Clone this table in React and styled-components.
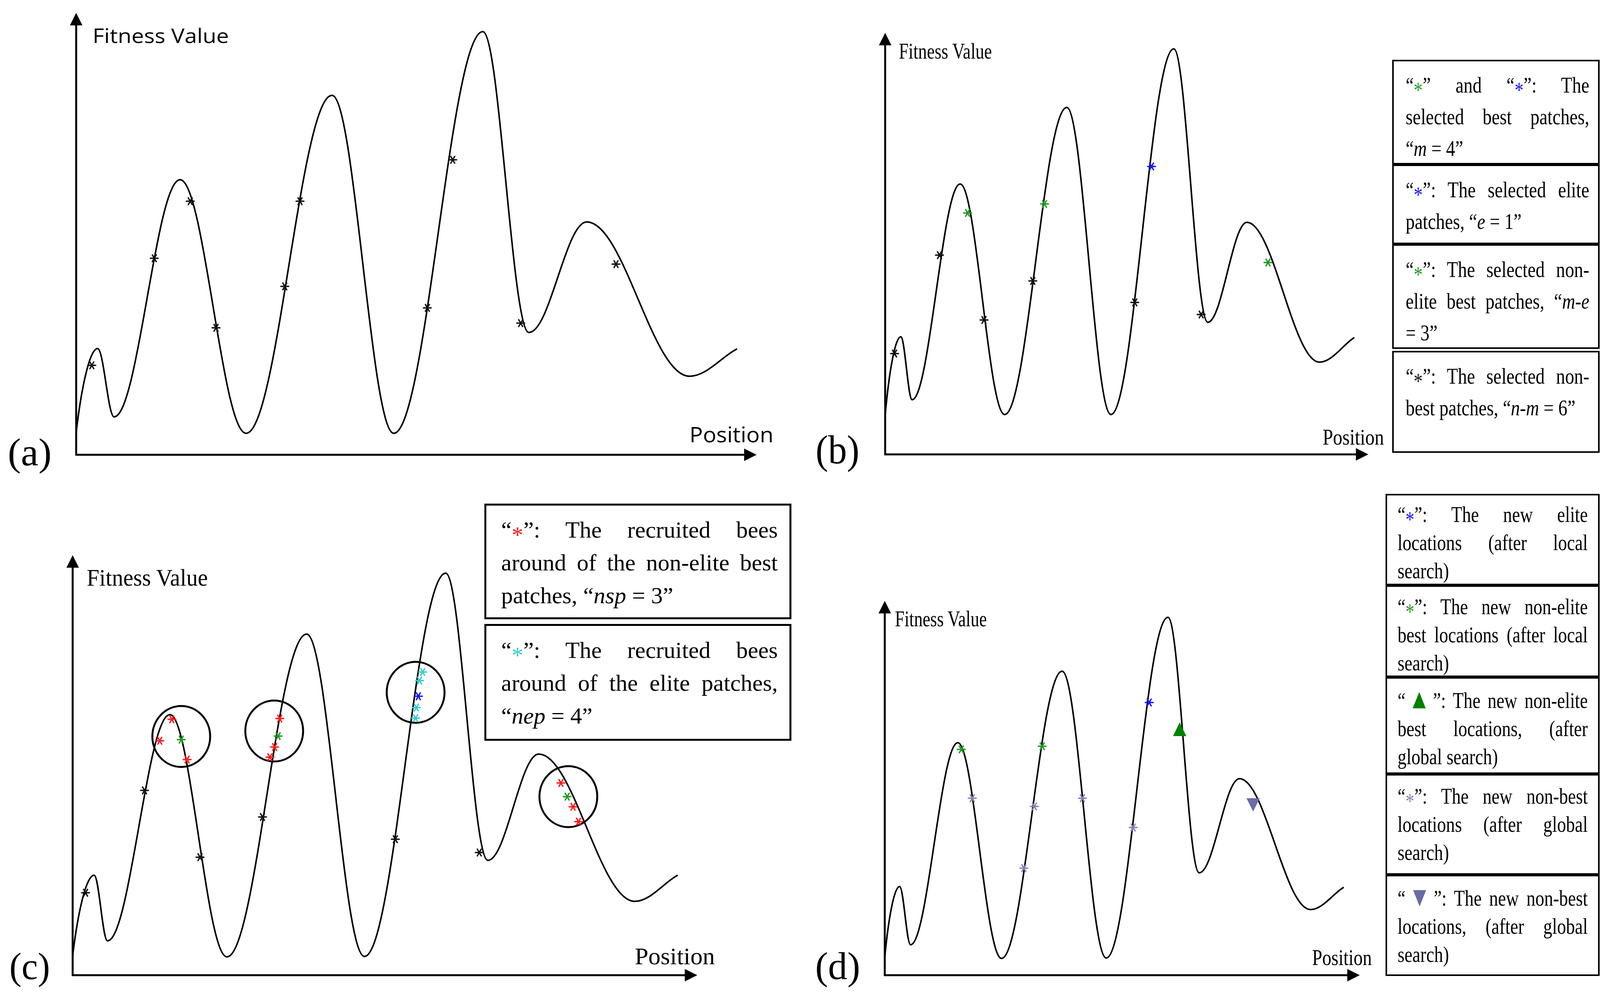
import styled, { createGlobalStyle } from 'styled-components';

const GlobalStyle = createGlobalStyle`
  html, body {
    margin: 0;
    padding: 0;
    background: #fff;
    overflow: hidden;
  }
  body {
    font-family: "Liberation Serif", "Times New Roman", serif;
    color: #000;
  }
`;

// colours of the markers
const C = {
  black: '#111',
  green: '#229922',
  blue: '#1414ff',
  red: '#ff1a1a',
  cyan: '#33cccc',
  slate: '#8585b8',
  tri: '#008000',
  triDown: '#6b6ba3',
};

// em widths of the axis words in Liberation Serif
const EM = { fitness: 5.672, position: 3.279 };

const Figure = styled.div`
  width: 4110px;
  height: 2539px;
  display: grid;
  grid-template-columns: 2080px 2030px;
  grid-template-rows: 1250px 1289px;
  background: #fff;
`;

const Panel = styled.div`
  display: flex;
  align-items: flex-start;
  overflow: hidden;
`;

// chart with a legend laid over it
const Stage = styled.div`
  display: grid;
  & > * {
    grid-area: 1 / 1;
  }
`;

const ChartSvg = styled.svg`
  display: block;
  flex: none;
`;

const AxisText = styled.text`
  font-family: ${(p) =>
    p.$sans ? '"Open Sans", "Noto Sans", "Liberation Sans", sans-serif' : '"Liberation Serif", "Times New Roman", serif'};
  fill: #000;
`;

const PanelTag = styled.text`
  font-family: "Liberation Serif", "Times New Roman", serif;
  fill: #000;
`;

const LegendStack = styled.div`
  display: flex;
  flex-direction: column;
  flex: none;
  width: ${(p) => p.$w}px;
  margin-top: ${(p) => p.$top}px;
  margin-left: ${(p) => p.$left || 0}px;
  gap: ${(p) => p.$gap || 0}px;
  align-self: start;
  justify-self: start;
`;

const LegendBox = styled.div`
  box-sizing: border-box;
  height: ${(p) => p.$h}px;
  margin-top: ${(p) => p.$mt || 0}px;
  border: ${(p) => p.$bw}px solid #000;
  padding: ${(p) => p.$pt}px ${(p) => p.$pr}px 0 ${(p) => p.$pl}px;
  font-family: "Liberation Serif", "Times New Roman", serif;
  font-size: ${(p) => p.$fs}px;
  line-height: ${(p) => p.$lh}px;
  color: #000;
  background: #fff;
`;

// a squeezed line is laid out wider and shrunk back from its right edge,
// so its box never reaches past the page
const Line = styled.div`
  height: ${(p) => p.$lh}px;
  width: ${(p) => (p.$squeeze ? `${100 / p.$squeeze}%` : '100%')};
  margin-left: ${(p) => (p.$squeeze ? `${100 - 100 / p.$squeeze}%` : '0')};
  transform: ${(p) => (p.$squeeze ? `scaleX(${p.$squeeze})` : 'none')};
  transform-origin: 100% 0;
  text-align: ${(p) => (p.$last ? 'left' : 'justify')};
  text-align-last: ${(p) => (p.$last ? 'left' : 'justify')};
`;

const Mark = styled.span`
  color: ${(p) => p.$c};
  position: relative;
  line-height: 0;
  top: ${(p) => (p.$shape ? '0.02em' : '0.22em')};
  font-size: ${(p) => (p.$shape ? '1.25em' : '1em')};
`;

const Var = styled.i`
  font-style: italic;
`;

const K = 0.363;

const curvePath = (pts) => {
  let d = `M${pts[0][0]},${pts[0][1]}`;
  for (let i = 1; i < pts.length; i++) {
    const [x0, y0] = pts[i - 1];
    const [x1, y1] = pts[i];
    const dx = x1 - x0;
    const first = i === 1;
    const last = i === pts.length - 1;
    const c1 = first ? [x0 + 0.25 * dx, y0 + 0.55 * (y1 - y0)] : [x0 + K * dx, y0];
    const c2 = last ? [x1 - 0.3 * dx, y1 + 0.25 * (y0 - y1)] : [x1 - K * dx, y1];
    d += ` C${c1[0]},${c1[1]} ${c2[0]},${c2[1]} ${x1},${y1}`;
  }
  return d;
};

const Asterisk = ({ x, y, color, r = 10 }) => (
  <g stroke={color} strokeWidth={3.5} strokeLinecap="round">
    <line x1={x - r} y1={y} x2={x + r} y2={y} />
    <line x1={x - r / 2} y1={y - r * 0.866} x2={x + r / 2} y2={y + r * 0.866} />
    <line x1={x + r / 2} y1={y - r * 0.866} x2={x - r / 2} y2={y + r * 0.866} />
  </g>
);

const Axes = ({ ax, ay, top, right, head = 32 }) => (
  <g>
    <line x1={ax} y1={ay + 2} x2={ax} y2={top + head - 4} stroke="#000" strokeWidth={5} />
    <polygon points={`${ax - head / 2},${top + head} ${ax},${top} ${ax + head / 2},${top + head}`} fill="#000" />
    <line x1={ax - 2} y1={ay} x2={right - head + 4} y2={ay} stroke="#000" strokeWidth={5} />
    <polygon points={`${right - head},${ay - head / 2} ${right},${ay} ${right - head},${ay + head / 2}`} fill="#000" />
  </g>
);

// sans labels are fitted with textLength, serif ones are squeezed by a transform
const Label = ({ sans, spec, em, children }) =>
  sans ? (
    <AxisText $sans x={spec.x} y={spec.y} fontSize={spec.fs} textLength={spec.len} lengthAdjust="spacingAndGlyphs">
      {children}
    </AxisText>
  ) : (
    <AxisText transform={`translate(${spec.x} ${spec.y}) scale(${(spec.len / (em * spec.fs)).toFixed(3)} 1)`} fontSize={spec.fs}>
      {children}
    </AxisText>
  );

const Chart = ({ spec }) => (
  <ChartSvg width={spec.w} height={spec.h} viewBox={`0 0 ${spec.w} ${spec.h}`}>
    <Axes ax={spec.ax} ay={spec.ay} top={spec.top} right={spec.right} />
    <path d={curvePath(spec.curve)} fill="none" stroke="#000" strokeWidth={4} strokeLinejoin="round" />
    {(spec.circles || []).map(([x, y], i) => (
      <ellipse key={i} cx={x} cy={y} rx={74} ry={78} fill="none" stroke="#000" strokeWidth={5} />
    ))}
    {spec.stars.map(([x, y, c], i) => (
      <Asterisk key={i} x={x} y={y} color={c} />
    ))}
    {(spec.triangles || []).map(([x, y, up, c], i) => (
      <polygon
        key={i}
        points={
          up
            ? `${x - 17},${y + 17} ${x + 17},${y + 17} ${x},${y - 18}`
            : `${x - 17},${y - 17} ${x + 17},${y - 17} ${x},${y + 17}`
        }
        fill={c}
      />
    ))}
    <Label sans={spec.sans} spec={spec.yLabel} em={EM.fitness}>
      Fitness Value
    </Label>
    <Label sans={spec.sans} spec={spec.xLabel} em={EM.position}>
      Position
    </Label>
    <PanelTag x={spec.tag.x} y={spec.tag.y} fontSize={spec.tag.fs} textLength={spec.tag.len} lengthAdjust="spacingAndGlyphs">
      {spec.tag.text}
    </PanelTag>
  </ChartSvg>
);

const chartA = {
  w: 2080,
  h: 1250,
  sans: true,
  ax: 195,
  ay: 1164,
  top: 33,
  right: 1937,
  curve: [
    [195, 1107], [250, 892], [292, 1067], [461, 460], [630, 1109], [850, 244],
    [1008, 1109], [1236, 81], [1354, 851], [1502, 568], [1765, 963], [1887, 893],
  ],
  stars: [
    [235, 935, C.black], [395, 661, C.black], [487, 515, C.black], [553, 839, C.black],
    [729, 733, C.black], [768, 515, C.black], [1094, 788, C.black], [1159, 409, C.black],
    [1333, 827, C.black], [1577, 676, C.black],
  ],
  yLabel: { x: 237, y: 110, fs: 52, len: 349 },
  xLabel: { x: 1765, y: 1132, fs: 54, len: 215 },
  tag: { x: 20, y: 1191, fs: 100, len: 112, text: '(a)' },
};

const chartB = {
  w: 1484,
  h: 1250,
  ax: 186,
  ay: 1163,
  top: 84,
  right: 1423,
  curve: [
    [186, 1063], [226, 862], [255, 1023], [378, 471], [492, 1061], [651, 275],
    [764, 1061], [925, 125], [1012, 825], [1112, 569], [1298, 927], [1387, 864],
  ],
  stars: [
    [210, 905, C.black], [325, 653, C.black], [439, 819, C.black], [564, 719, C.black],
    [825, 774, C.black], [995, 805, C.black], [397, 545, C.green], [594, 522, C.green],
    [1166, 672, C.green], [868, 426, C.blue],
  ],
  yLabel: { x: 221, y: 150, fs: 56, len: 253 },
  xLabel: { x: 1306, y: 1138, fs: 56, len: 157 },
  tag: { x: 8, y: 1186, fs: 103, len: 112, text: '(b)' },
};

const chartC = {
  w: 2080,
  h: 1289,
  ax: 186,
  ay: 1246,
  top: 171,
  right: 1785,
  curve: [
    [186, 1196], [241, 990], [275, 1158], [435, 579], [581, 1199], [785, 373],
    [933, 1198], [1141, 217], [1249, 952], [1379, 680], [1625, 1057], [1735, 990],
  ],
  circles: [[464, 635], [702, 621], [1064, 522], [1455, 789]],
  stars: [
    [219, 1035, C.black], [370, 773, C.black], [512, 944, C.black], [672, 841, C.black],
    [1012, 898, C.black], [1227, 932, C.black],
    [440, 591, C.red], [409, 646, C.red], [479, 694, C.red], [464, 643, C.green],
    [716, 589, C.red], [703, 662, C.red], [691, 688, C.red], [712, 634, C.green],
    [1082, 470, C.cyan], [1074, 492, C.cyan], [1066, 561, C.cyan], [1064, 588, C.cyan],
    [1071, 532, C.blue],
    [1436, 754, C.red], [1467, 815, C.red], [1481, 853, C.red], [1452, 789, C.green],
  ],
  yLabel: { x: 222, y: 249, fs: 62, len: 329 },
  xLabel: { x: 1625, y: 1218, fs: 62, len: 205 },
  tag: { x: 24, y: 1256, fs: 98, len: 104, text: '(c)' },
};

const chartD = {
  w: 1467,
  h: 1289,
  ax: 185,
  ay: 1246,
  top: 288,
  right: 1401,
  curve: [
    [185, 1200], [223, 1019], [251, 1168], [372, 651], [484, 1203], [639, 468],
    [752, 1202], [910, 330], [990, 984], [1093, 743], [1275, 1078], [1360, 1021],
  ],
  stars: [
    [381, 668, C.green], [588, 660, C.green], [862, 548, C.blue],
    [409, 793, C.slate], [568, 814, C.slate], [691, 793, C.slate], [541, 972, C.slate],
    [821, 868, C.slate],
  ],
  triangles: [
    [940, 617, true, C.tri],
    [1128, 810, false, C.triDown],
  ],
  yLabel: { x: 211, y: 353, fs: 56, len: 250 },
  xLabel: { x: 1279, y: 1220, fs: 56, len: 153 },
  tag: { x: 7, y: 1256, fs: 100, len: 115, text: '(d)' },
};

const q = (c, sym = '*') => (
  <>
    “<Mark $c={c} $shape={sym !== '*'}>{sym}</Mark>”
  </>
);

const legendB = {
  top: 153, w: 531, bw: 4, fs: 58, lh: 81, pt: 20, pl: 30, pr: 23, squeeze: 0.8,
  boxes: [
    { h: 268, lines: [<>{q(C.green)} and {q(C.blue)}: The</>, <>selected best patches,</>, <>“<Var>m</Var> = 4”</>] },
    { h: 204, lines: [<>{q(C.blue)}: The selected elite</>, <>patches, “<Var>e</Var> = 1”</>] },
    { h: 268, lines: [<>{q(C.green)}: The selected non-</>, <>elite best patches, “<Var>m-e</Var></>, <>= 3”</>] },
    { h: 261, mt: 5, lines: [<>{q(C.black)}: The selected non-</>, <>best patches, “<Var>n-m</Var> = 6”</>] },
  ],
};

const legendC = {
  top: 39, left: 1240, w: 786, bw: 5, fs: 60, lh: 84, pt: 20, pl: 38, pr: 30, gap: 12,
  boxes: [
    { h: 296, lines: [<>{q(C.red)}: The recruited bees</>, <>around of the non-elite best</>, <>patches, “<Var>nsp</Var> = 3”</>] },
    { h: 299, lines: [<>{q(C.cyan)}: The recruited bees</>, <>around of the elite patches,</>, <>“<Var>nep</Var> = 4”</>] },
  ],
};

const legendD = {
  top: 14, w: 548, bw: 4, fs: 57, lh: 72, pl: 27, pr: 26, squeeze: 0.8,
  boxes: [
    { h: 234, pt: 13, lines: [<>{q(C.blue)}: The new elite</>, <>locations (after local</>, <>search)</>] },
    { h: 235, pt: 15, lines: [<>{q(C.green)}: The new non-elite</>, <>best locations (after local</>, <>search)</>] },
    { h: 248, pt: 20, lines: [<>{q(C.tri, '▲')}: The new non-elite</>, <>best locations, (after</>, <>global search)</>] },
    { h: 258, pt: 17, lines: [<>{q(C.slate)}: The new non-best</>, <>locations (after global</>, <>search)</>] },
    { h: 259, pt: 20, lines: [<>{q(C.triDown, '▼')}: The new non-best</>, <>locations, (after global</>, <>search)</>] },
  ],
};

const Legend = ({ spec }) => (
  <LegendStack $w={spec.w} $top={spec.top} $left={spec.left} $gap={spec.gap}>
    {spec.boxes.map((box, i) => (
      <LegendBox
        key={i}
        $h={box.h}
        $mt={box.mt}
        $bw={spec.bw}
        $fs={spec.fs}
        $lh={spec.lh}
        $pt={box.pt ?? spec.pt}
        $pl={spec.pl}
        $pr={spec.pr}
      >
        {box.lines.map((line, j) => (
          <Line key={j} $lh={spec.lh} $squeeze={spec.squeeze} $last={j === box.lines.length - 1}>
            {line}
          </Line>
        ))}
      </LegendBox>
    ))}
  </LegendStack>
);

export default function App() {
  return (
    <>
      <GlobalStyle />
      <Figure>
        <Panel>
          <Chart spec={chartA} />
        </Panel>
        <Panel>
          <Chart spec={chartB} />
          <Legend spec={legendB} />
        </Panel>
        <Panel>
          <Stage>
            <Chart spec={chartC} />
            <Legend spec={legendC} />
          </Stage>
        </Panel>
        <Panel>
          <Chart spec={chartD} />
          <Legend spec={legendD} />
        </Panel>
      </Figure>
    </>
  );
}
